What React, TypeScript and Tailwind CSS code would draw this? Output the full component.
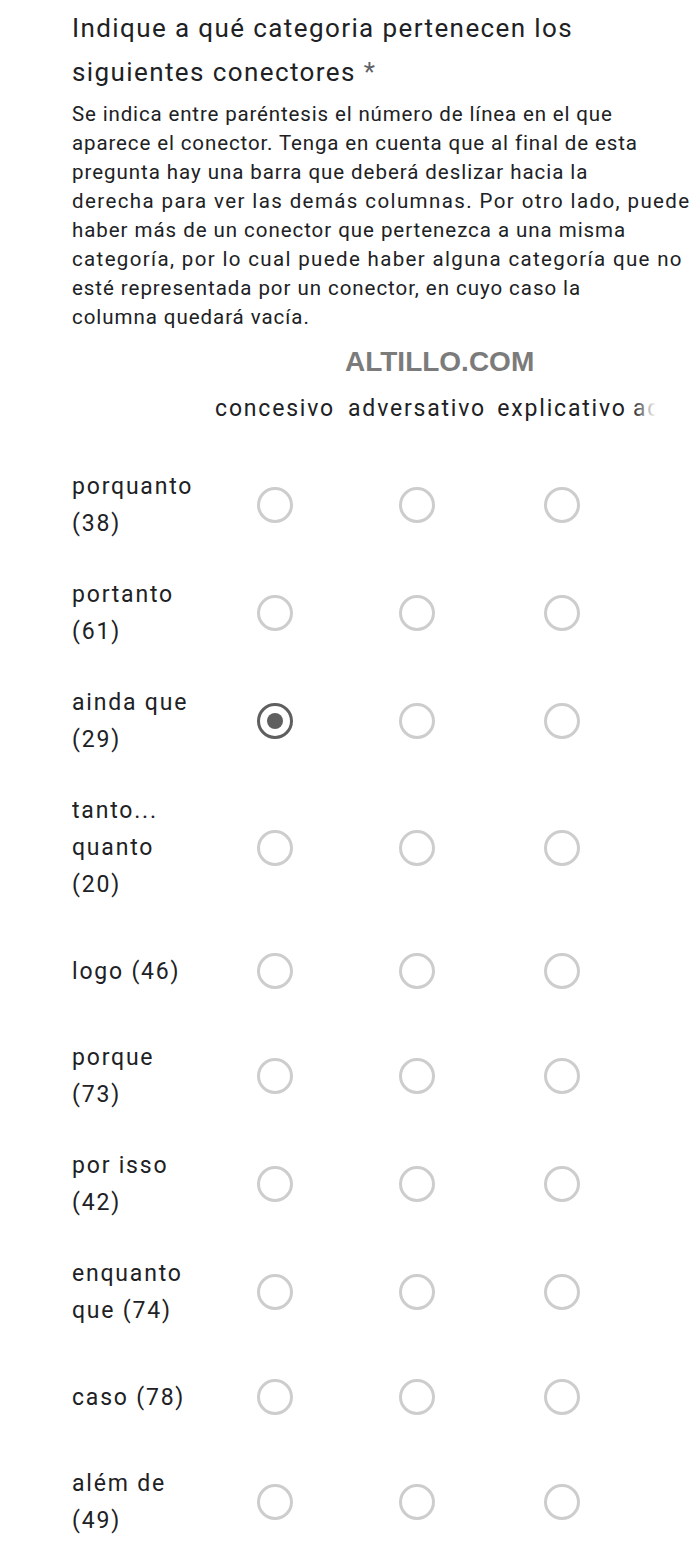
import React from "react";

const cols = [
  { name: "concesivo", w: "w-[134px]", align: "text-center" },
  { name: "adversativo", w: "w-[150px]", align: "text-center" },
  { name: "explicativo", w: "w-[140px]", align: "text-center" },
  { name: "aditivo", w: "w-[130px]", align: "text-left pl-[1px]" },
];

const rows: { label: string; sel?: number }[] = [
  { label: "porquanto (38)" },
  { label: "portanto (61)" },
  { label: "ainda que (29)", sel: 0 },
  { label: "tanto... quanto (20)" },
  { label: "logo (46)" },
  { label: "porque (73)" },
  { label: "por isso (42)" },
  { label: "enquanto que (74)" },
  { label: "caso (78)" },
  { label: "além de (49)" },
];

const descLines = [
  { t: "Se indica entre paréntesis el número de línea en el que", c: "tracking-[0.85px]" },
  { t: "aparece el conector. Tenga en cuenta que al final de esta", c: "tracking-[0.88px]" },
  { t: "pregunta hay una barra que deberá deslizar hacia la", c: "tracking-[0.95px]" },
  { t: "derecha para ver las demás columnas. Por otro lado, puede", c: "tracking-[1.4px]" },
  { t: "haber más de un conector que pertenezca a una misma", c: "tracking-[0.95px]" },
  { t: "categoría, por lo cual puede haber alguna categoría que no", c: "tracking-[1.35px]" },
  { t: "esté representada por un conector, en cuyo caso la", c: "tracking-[0.95px]" },
  { t: "columna quedará vacía.", c: "tracking-[0.95px]" },
];

function Radio({ checked }: { checked?: boolean }) {
  if (checked) {
    return (
      <span className="flex h-[36px] w-[36px] items-center justify-center rounded-full border-[3px] border-[#5f5f5f]">
        <span className="h-[16px] w-[16px] rounded-full bg-[#5f5f5f]" />
      </span>
    );
  }
  return <span className="block h-[36px] w-[36px] rounded-full border-[3px] border-[#cdcdcd]" />;
}

export default function App() {
  return (
    <div className="min-h-[1545px] bg-white pt-[6px] text-[#202124] [font-family:Roboto,'Noto_Sans',sans-serif]">
      <div className="pl-[72px] pr-[4px]">
        <h1 className="text-[26px] font-normal leading-[44px] tracking-[1.4px]">
          Indique a qué categoria pertenecen los siguientes conectores{" "}
          <span className="text-[#5f6368]">*</span>
        </h1>
        <p className="mt-[5.5px] text-[20.5px] leading-[29px]">
          {descLines.map((l) => (
            <span key={l.t} className={`block whitespace-nowrap ${l.c}`}>
              {l.t}
            </span>
          ))}
        </p>
      </div>

      <div className="mt-[15.5px] flex h-[30px] items-center pl-[345px] text-[28px] font-bold leading-[30px] text-[#7b7b7b] [font-family:'Liberation_Sans',Arial,sans-serif]">
        ALTILLO.COM
      </div>

      <div className="relative ml-[72px] mt-[12.5px] w-[584px] overflow-hidden">
        <div className="w-max">
          <div className="flex pb-[24.5px]">
            <div className="w-[136px] shrink-0" />
            {cols.map((c) => (
              <div
                key={c.name}
                className={`${c.w} ${c.align} shrink-0 whitespace-nowrap text-[23px] leading-[37px] tracking-[1.8px]`}
              >
                {c.name}
              </div>
            ))}
          </div>
          {rows.map((r) => (
            <div key={r.label} className="flex items-center py-[17px]">
              <div className="w-[136px] shrink-0 pr-[8px] text-[23px] leading-[37px] tracking-[1.8px]">{r.label}</div>
              {cols.map((c, i) => (
                <div key={c.name} className={`${c.w} flex h-[68px] shrink-0 items-center justify-center`}>
                  <Radio checked={r.sel === i} />
                </div>
              ))}
            </div>
          ))}
        </div>
        <div className="pointer-events-none absolute right-0 top-0 h-full w-[24px] bg-gradient-to-r from-transparent to-white" />
      </div>
    </div>
  );
}
